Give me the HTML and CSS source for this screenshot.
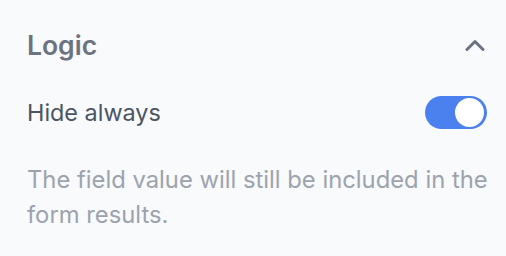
FILE: index.html
```html
<!DOCTYPE html>
<html>
<head>
<meta charset="utf-8">
<link rel="stylesheet" href="styles.css">
</head>
<body>
<section class="panel">
  <div class="header">
    <h2 class="title">Logic</h2>
    <svg class="chevron" width="20" height="12" viewBox="0 0 20 12"><path d="M2 10.5 L10 2.5 L18 10.5" fill="none" stroke="#6b7280" stroke-width="3" stroke-linecap="round" stroke-linejoin="round"/></svg>
  </div>
  <div class="row">
    <span class="label">Hide always</span>
    <span class="toggle"><span class="knob"></span></span>
  </div>
  <p class="desc">The field value will still be included in the form results.</p>
</section>
</body>
</html>
```
FILE: styles.css
```css
html, body { margin: 0; padding: 0; }
body { background: #f9fafb; font-family: Inter, "Noto Sans", sans-serif; width: 506px; height: 256px; overflow: hidden; }
.panel { padding: 26px 19px 0 27px; }
.header { display: flex; align-items: center; justify-content: space-between; height: 38px; }
.title { margin: 0; font-size: 26.5px; font-weight: 600; color: #6b7280; line-height: 38px; }
.chevron { margin-right: 2px; }
.row { display: flex; align-items: center; justify-content: space-between; margin-top: 32px; height: 33px; }
.label { font-size: 23.4px; color: #4b5563; }
.toggle { width: 62px; height: 33px; border-radius: 17px; background: #4b81ee; display: flex; align-items: center; justify-content: flex-end; padding: 0 3px; box-sizing: border-box; }
.knob { width: 29px; height: 29px; border-radius: 50%; background: #fff; }
.desc { margin: 33px -14px 0 0; font-size: 23.8px; line-height: 35px; color: #9ca3af; }
```
